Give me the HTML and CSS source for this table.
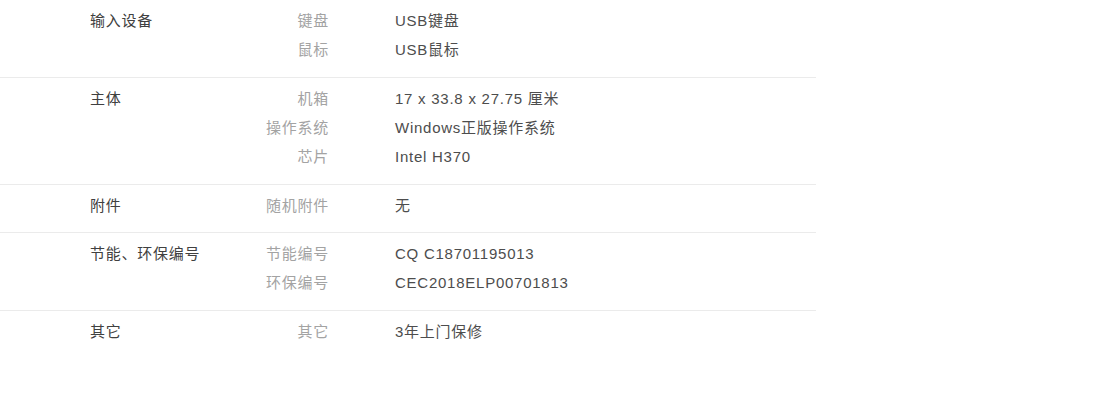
FILE: index.html
```html
<!DOCTYPE html>
<html lang="zh-CN">
  <head>
    <meta charset="UTF-8">
    <meta name="viewport" content="width=device-width,initial-scale=1.0">
    <title>规格参数</title>
    <link rel="stylesheet" href="styles.css">
  </head>
  <body>
    <div class="specs">
      <div class="group">
        <div class="title">输入设备</div>
        <dl class="items">
          <div class="item"><dt>键盘</dt><dd>USB键盘</dd></div>
          <div class="item"><dt>鼠标</dt><dd>USB鼠标</dd></div>
        </dl>
      </div>
      <div class="group">
        <div class="title">主体</div>
        <dl class="items">
          <div class="item"><dt>机箱</dt><dd>17 x 33.8 x 27.75 厘米</dd></div>
          <div class="item"><dt>操作系统</dt><dd>Windows正版操作系统</dd></div>
          <div class="item"><dt>芯片</dt><dd>Intel H370</dd></div>
        </dl>
      </div>
      <div class="group single">
        <div class="title">附件</div>
        <dl class="items">
          <div class="item"><dt>随机附件</dt><dd>无</dd></div>
        </dl>
      </div>
      <div class="group">
        <div class="title">节能、环保编号</div>
        <dl class="items">
          <div class="item"><dt>节能编号</dt><dd>CQ C18701195013</dd></div>
          <div class="item"><dt>环保编号</dt><dd>CEC2018ELP00701813</dd></div>
        </dl>
      </div>
      <div class="group last">
        <div class="title">其它</div>
        <dl class="items">
          <div class="item"><dt>其它</dt><dd>3年上门保修</dd></div>
        </dl>
      </div>
    </div>
  </body>
</html>
```

FILE: styles.css
```css
:root{--line:#ebebeb;--title:#404040;--label:#a3a3a3;--value:#4d4d4d}
*{box-sizing:border-box}
body{margin:0;background:#fff;font-family:"Liberation Sans",Arial,"Noto Sans CJK SC",sans-serif;font-size:15px;letter-spacing:.75px}
.specs{width:816px}
.group{display:flex;padding:6px 0 13px;border-bottom:1px solid var(--line)}
.group.single{padding-bottom:12px}
.group.last{border-bottom:none}
.title{width:250px;padding-left:90px;line-height:29px;color:var(--title)}
.items{margin:0}
.item{display:flex;line-height:29px}
dt{width:79px;text-align:right;color:var(--label)}
dd{margin:0 0 0 66px;color:var(--value)}
```
